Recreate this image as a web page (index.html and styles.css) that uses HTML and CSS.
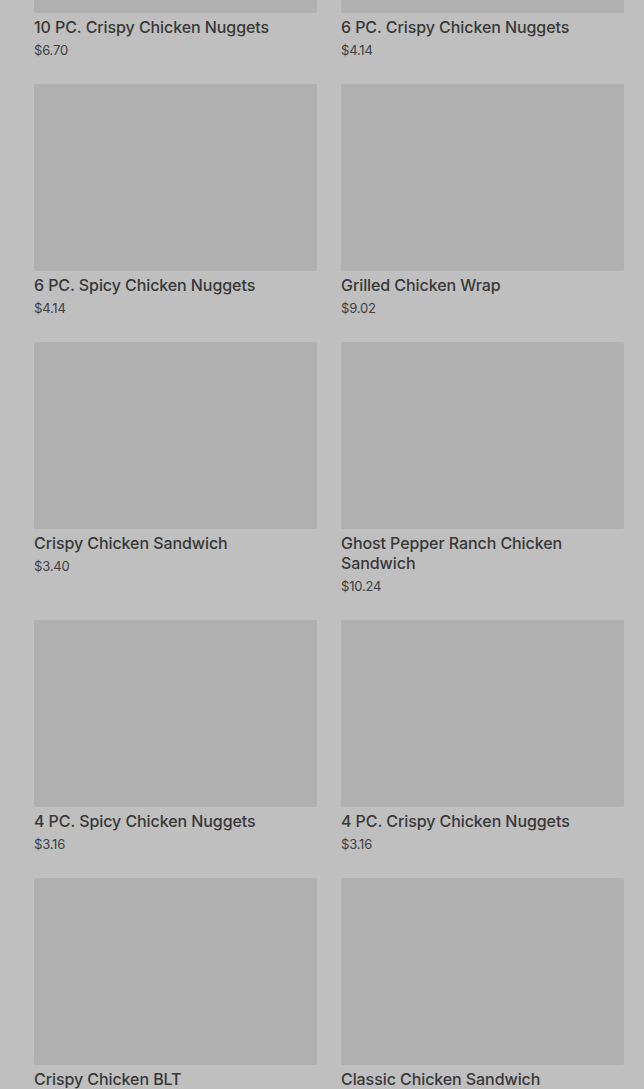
FILE: index.html
```html
<html>
    <head>
        <title>Menu</title>
        <link rel="stylesheet" href="styles.css">
    </head>
    <body>
        <div class="menu-grid">
            <div class="item">
                <div class="item-photo"></div>
                <div class="item-name">10 PC. Crispy Chicken Nuggets</div>
                <div class="item-price">$6.70</div>
            </div>
            <div class="item">
                <div class="item-photo"></div>
                <div class="item-name">6 PC. Crispy Chicken Nuggets</div>
                <div class="item-price">$4.14</div>
            </div>
            <div class="item">
                <div class="item-photo"></div>
                <div class="item-name">6 PC. Spicy Chicken Nuggets</div>
                <div class="item-price">$4.14</div>
            </div>
            <div class="item">
                <div class="item-photo"></div>
                <div class="item-name">Grilled Chicken Wrap</div>
                <div class="item-price">$9.02</div>
            </div>
            <div class="item">
                <div class="item-photo"></div>
                <div class="item-name">Crispy Chicken Sandwich</div>
                <div class="item-price">$3.40</div>
            </div>
            <div class="item">
                <div class="item-photo"></div>
                <div class="item-name">Ghost Pepper Ranch Chicken Sandwich</div>
                <div class="item-price">$10.24</div>
            </div>
            <div class="item">
                <div class="item-photo"></div>
                <div class="item-name">4 PC. Spicy Chicken Nuggets</div>
                <div class="item-price">$3.16</div>
            </div>
            <div class="item">
                <div class="item-photo"></div>
                <div class="item-name">4 PC. Crispy Chicken Nuggets</div>
                <div class="item-price">$3.16</div>
            </div>
            <div class="item">
                <div class="item-photo"></div>
                <div class="item-name">Crispy Chicken BLT</div>
            </div>
            <div class="item">
                <div class="item-photo"></div>
                <div class="item-name">Classic Chicken Sandwich</div>
            </div>
        </div>
    </body>
</html>
```

FILE: styles.css
```css
body{
    margin: 0;
    background-color: #bfbfbf;
    font-family: Inter, 'Liberation Sans', sans-serif;
    overflow: hidden;
}
.menu-grid{
    display: grid;
    grid-template-columns: 283px 283px;
    column-gap: 24px;
    row-gap: 25px;
    padding: 0 20px 0 34px;
    margin-top: -174px;
}
.item{
    display: flex;
    flex-direction: column;
}
.item-photo{
    height: 187px;
    background-color: #b0b0b0;
    border-radius: 2px;
}
.item-name{
    margin-top: 4px;
    font-size: 16px;
    line-height: 20px;
    font-weight: 500;
    letter-spacing: -0.08px;
    color: #383838;
}
.item-price{
    margin-top: 4px;
    font-size: 13px;
    line-height: 18px;
    color: #404040;
    letter-spacing: -0.2px;
}
```
